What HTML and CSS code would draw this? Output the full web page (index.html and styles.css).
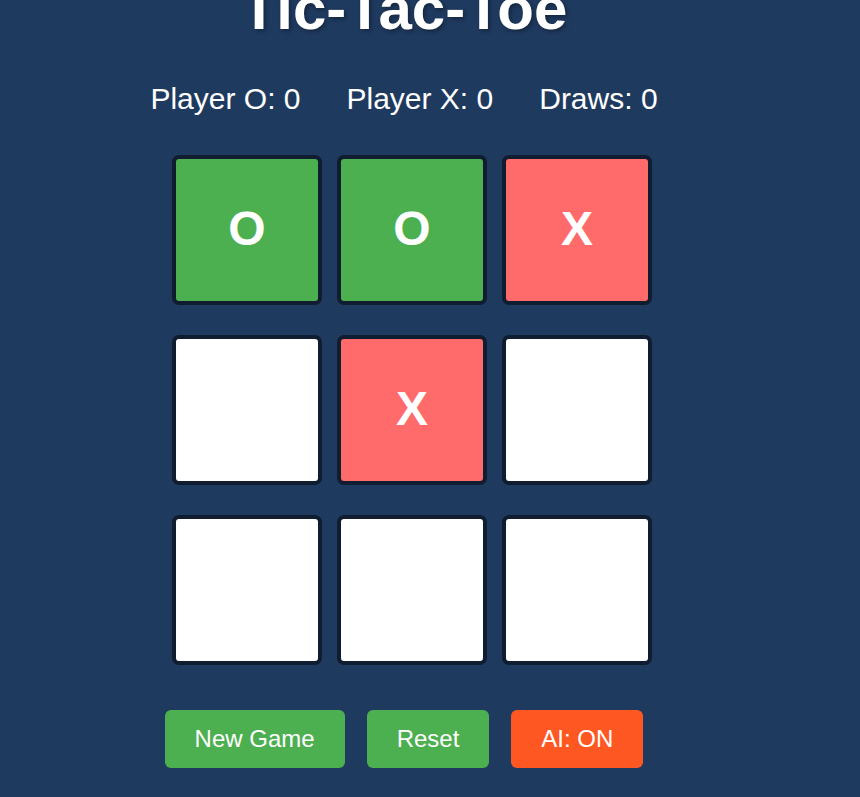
FILE: index.html
```html
<!DOCTYPE html>
<html lang="en">
<head>
<meta charset="utf-8">
<title>Tic-Tac-Toe</title>
<link rel="stylesheet" href="styles.css">
</head>
<body>
<div class="app">
  <h1 class="title">Tic-Tac-Toe</h1>
  <div class="scores">
    <span class="score">Player O: 0</span>
    <span class="score">Player X: 0</span>
    <span class="score">Draws: 0</span>
  </div>
  <div class="board">
    <div class="cell cell-o">O</div>
    <div class="cell cell-o">O</div>
    <div class="cell cell-x">X</div>
    <div class="cell"></div>
    <div class="cell cell-x">X</div>
    <div class="cell"></div>
    <div class="cell"></div>
    <div class="cell"></div>
    <div class="cell"></div>
  </div>
  <div class="controls">
    <button class="btn btn-green">New Game</button>
    <button class="btn btn-green">Reset</button>
    <button class="btn btn-orange">AI: ON</button>
  </div>
</div>
</body>
</html>
```
FILE: styles.css
```css
html, body {
  margin: 0;
  padding: 0;
  background: #1f3a5f;
  height: 100%;
  overflow: hidden;
}
body {
  font-family: "Liberation Sans", Arial, sans-serif;
  color: #ffffff;
}
.app {
  width: 808px;
  display: flex;
  flex-direction: column;
  align-items: center;
}
.title {
  margin: -21px 0 0 0;
  font-size: 60px;
  line-height: 60px;
  font-weight: bold;
  text-shadow: 2px 2px 4px rgba(0, 0, 0, 0.35);
}
.scores {
  margin-top: 43px;
  display: flex;
  gap: 46px;
  font-size: 30px;
  line-height: 34px;
}
.board {
  margin-top: 39px;
  margin-left: 16px;
  display: grid;
  grid-template-columns: repeat(3, 150px);
  grid-auto-rows: 150px;
  gap: 30px 15px;
}
.cell {
  box-sizing: border-box;
  border: 4px solid #101d30;
  border-radius: 7px;
  background: #ffffff;
  display: flex;
  align-items: center;
  justify-content: center;
  padding-bottom: 3px;
  font-size: 48px;
  font-weight: bold;
  color: #ffffff;
}
.cell-o { background: #4caf50; }
.cell-x { background: #ff6b6b; }
.controls {
  margin-top: 45px;
  display: flex;
  gap: 22px;
}
.btn {
  font-family: "Liberation Sans", Arial, sans-serif;
  font-size: 24px;
  line-height: 28px;
  padding: 15px 30px;
  border: none;
  border-radius: 6px;
  color: #ffffff;
  cursor: pointer;
}
.btn-green { background: #4caf50; }
.btn-orange { background: #ff5722; }
```
